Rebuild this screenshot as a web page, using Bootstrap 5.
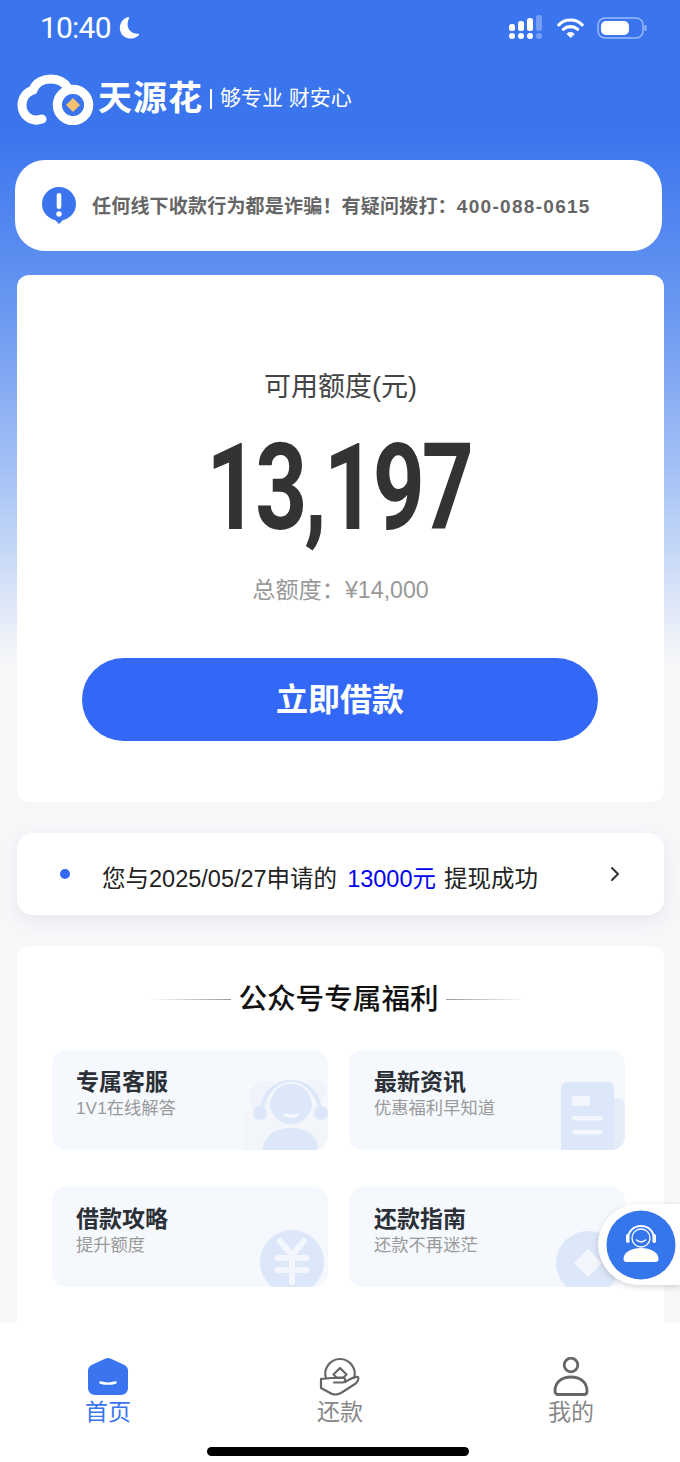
<!DOCTYPE html>
<html lang="zh-CN">
<head>
    <meta charset="UTF-8" />
    <meta name="viewport" content="width=device-width, initial-scale=1.0" />
    <title>天源花</title>
    <link href="https://cdn.jsdelivr.net/npm/bootstrap@5.3.2/dist/css/bootstrap.min.css" rel="stylesheet">
    <style>
        html, body { margin: 0; height: 100%; }
        body { font-family: "Liberation Sans", "Noto Sans CJK SC", sans-serif; background: #f6f7f9; }
        .app-screen { width: 680px; height: 1462px; overflow: hidden; background: linear-gradient(180deg, #3a75ef 0, #3a75ee 130px, #6d9af2 320px, #b4ccf6 510px, #f6f7f9 660px); }
        .status-row { height: 54px; padding: 1px 33px 0 40px; color: #fff; }
        .clock { font-family: "Roboto", sans-serif; font-size: 30px; line-height: 40px; letter-spacing: -.8px; }
        .status-gap { margin-left: 13px; }
        .logo-row { height: 51px; margin: 20px 0 0 17px; color: #fff; }
        .logo-name { font-size: 34px; font-weight: 700; line-height: 51px; letter-spacing: 1px; margin: -3px 0 0 3px; }
        .logo-bar { width: 2px; height: 20px; background: #fff; margin: -2px 8px 0 7px; }
        .logo-slogan { font-size: 21px; line-height: 51px; margin-top: -4px; }
        .scam-box { height: 91px; margin: 35px 18px 0 15px; padding-left: 26px; background: #fff; border-radius: 30px; }
        .scam-text { font-size: 19px; font-weight: 700; color: #666; margin: 3px 0 0 15px; letter-spacing: .2px; white-space: nowrap; }
        .scam-tel { letter-spacing: 1.3px; }
        .limit-card { height: 527px; margin: 24px 16px 0 17px; padding-top: 92px; background: #fff; border-radius: 12px; text-align: center; }
        .limit-label { font-size: 27px; line-height: 40px; color: #444; }
        .limit-value { font-family: "Roboto", sans-serif; font-weight: 700; font-size: 121px; line-height: 130px; margin-top: 16px; color: #333; letter-spacing: -4px; transform: translateX(-2px) scaleX(.75); }
        .limit-total { font-size: 23.2px; line-height: 34px; margin-top: 20px; color: #999; }
        .borrow-btn { display: block; width: 516px; height: 83px; margin: 51px 0 0 65px; padding: 0; border: 0; border-radius: 42px; background: #3268f5; color: #fff; font-size: 32px; font-weight: 700; }
        .notice-bar { height: 82px; margin: 31px 16px 0 17px; padding: 0 43px; background: #fff; border-radius: 16px; box-shadow: 0 6px 16px rgba(40, 60, 100, .07); color: #222; font-size: 23.5px; }
        .notice-dot { width: 10px; height: 10px; border-radius: 50%; background: #3268f5; margin: 0 32px 0 0; }
        .notice-text { margin-top: 11px; }
        .notice-amount { color: #0000f0; margin: 0 8px 0 10px; }
        .perks-card { height: 420px; margin: 31px 16px 0 17px; padding: 36px 39px 0 35px; background: #fff; border-radius: 12px; }
        .perks-title { font-size: 28.6px; font-weight: 500; line-height: 34px; color: #111; }
        .title-rule { width: 81px; height: 1px; }
        .rule-l { background: linear-gradient(90deg, #fff, #999); margin-right: 7px; }
        .rule-r { background: linear-gradient(90deg, #999, #fff); margin-left: 7px; }
        .perks-grid { display: grid; grid-template-columns: 276px 276px; column-gap: 21px; row-gap: 37px; margin-top: 34px; }
        .perk-tile { height: 100px; padding: 16px 0 0 25px; background: #f5f8fc; border-radius: 14px; overflow: hidden; }
        .perk-tile:nth-child(odd) { padding-left: 24px; }
        .perk-name { font-size: 23px; font-weight: 700; line-height: 32px; color: #2b2f36; }
        .perk-sub { font-size: 17.3px; line-height: 20px; color: #9a9a9a; }
        .perk-art { position: absolute; right: 0; bottom: 0; }
        .float-help { right: 0; top: 1204px; width: 82px; height: 81px; padding-left: 8px; background: #fff; border-radius: 41px 0 0 41px; box-shadow: 0 2px 6px rgba(0, 0, 0, .16); }
        .tab-bar { left: 0; right: 0; top: 1323px; height: 139px; background: #fff; }
        .tab-item { width: 80px; top: 34px; font-size: 23px; line-height: 30px; color: #888; text-align: center; }
        .tab-item svg { display: block; margin: 0 auto; height: 40px; }
        .tab-on { color: #3a75ef; }
        .home-bar { left: 207px; top: 124px; width: 262px; height: 9px; border-radius: 5px; background: #000; }
    </style>
</head>

<body>
    <div class="app-screen position-relative">

        <!-- status bar -->
        <div class="status-row d-flex align-items-center justify-content-between">
            <div class="d-flex align-items-center">
                <span class="clock">10:40</span>
                <svg class="ms-2" width="21" height="24" viewBox="0 0 21 24"><path d="M9 1C2 3-1 11 2 17c3 6 12 8 18 2 .5-.5 0-1.500-1-1.300C14 18 10 15 9 11 8 8 9 5 10 2.500 10.300 1.500 10 .8 9 1z" fill="#fff"/></svg>
            </div>
            <div class="d-flex align-items-center">
                <svg width="36" height="25" viewBox="0 0 36 25" fill="#fff">
                    <rect x="1" y="9" width="6" height="7" rx="2.5"/><rect x="10" y="6" width="6" height="10" rx="2.5"/><rect x="19" y="3" width="6" height="13" rx="2.5"/><rect x="28" y="0" width="6" height="16" rx="2.5" opacity=".3"/>
                    <rect x="1" y="18" width="6" height="6" rx="3"/><rect x="10" y="18" width="6" height="6" rx="3"/><rect x="19" y="18" width="6" height="6" rx="3"/><rect x="28" y="18" width="6" height="6" rx="3" opacity=".3"/>
                </svg>
                <svg class="status-gap" width="27" height="23" viewBox="0 0 30 24" fill="none" stroke="#fff" stroke-width="3.4" stroke-linecap="round">
                    <path d="M2 9c7-7 19-7 26 0"/><path d="M7 14c4.500-4 11.500-4 16 0"/><path d="M15 23l-4-4c2-2 6-2 8 0z" fill="#fff" stroke-width="1"/>
                </svg>
                <svg class="status-gap" width="50" height="24" viewBox="0 0 50 24" fill="none">
                    <rect x="1" y="2" width="45" height="20" rx="7" stroke="#fff" stroke-opacity=".5" stroke-width="1.500"/>
                    <rect x="4" y="5" width="28" height="14" rx="5" fill="#fff"/>
                    <rect x="47.500" y="9" width="2" height="6" rx="1" fill="#fff" fill-opacity=".5"/>
                </svg>
            </div>
        </div>

        <!-- logo -->
        <div class="logo-row d-flex align-items-center">
            <svg width="78" height="51" viewBox="0 0 78 51" fill="none">
                <path d="M25 45C14 49 5 41 5 31c0-8 5-13 11-15 3-8 11-11 18-11 8 0 14 4 17 9" stroke="#fff" stroke-width="9" stroke-linecap="round"/>
                <circle cx="56" cy="31" r="15.500" stroke="#fff" stroke-width="9.500"/>
                <circle cx="56" cy="31" r="11" fill="#3a75ef"/>
                <path d="M56 24l7 7-7 7-7-7z" fill="#f3c16f"/>
            </svg>
            <span class="logo-name">天源花</span>
            <span class="logo-bar"></span>
            <span class="logo-slogan">够专业 财安心</span>
        </div>

        <!-- anti scam note -->
        <div class="scam-box d-flex align-items-center">
            <svg width="36" height="39" viewBox="0 0 36 39">
                <path d="M18 1C8 1 1 9 1 18c0 9 7 15 13 16l4 4 4-4c6-1 13-7 13-16C35 9 28 1 18 1z" fill="#3a75ef"/>
                <rect x="15.700" y="7" width="4.600" height="16" rx="2.300" fill="#fff"/><circle cx="18" cy="28" r="2.700" fill="#fff"/>
            </svg>
            <span class="scam-text">任何线下收款行为都是诈骗！有疑问拨打：<span class="scam-tel">400-088-0615</span></span>
        </div>

        <!-- available limit -->
        <div class="limit-card">
            <div class="limit-label">可用额度(元)</div>
            <div class="limit-value">13,197</div>
            <div class="limit-total">总额度：¥14,000</div>
            <button type="button" class="btn borrow-btn">立即借款</button>
        </div>

        <!-- withdraw notice -->
        <div class="notice-bar d-flex align-items-center">
            <span class="notice-dot flex-shrink-0"></span>
            <span class="notice-text flex-grow-1">您与2025/05/27申请的<span class="notice-amount">13000元</span>提现成功</span>
            <svg width="12" height="16" viewBox="0 0 12 16" fill="none" stroke="#333" stroke-width="2" stroke-linecap="round" stroke-linejoin="round"><path d="M3 2l6 6-6 6"/></svg>
        </div>

        <!-- perks -->
        <div class="perks-card">
            <div class="d-flex align-items-center justify-content-center">
                <span class="title-rule rule-l"></span>
                <span class="perks-title">公众号专属福利</span>
                <span class="title-rule rule-r"></span>
            </div>
            <div class="perks-grid">
                <div class="perk-tile position-relative">
                    <div class="perk-name">专属客服</div>
                    <div class="perk-sub">1V1在线解答</div>
                    <svg class="perk-art" width="88" height="80" viewBox="0 0 88 80">
                        <circle cx="26" cy="28" r="17" fill="#f0f4fa"/><circle cx="76" cy="20" r="11" fill="#f0f4fa"/>
                        <path d="M5 80V40l18-5h50l15 5v40z" fill="#f2f5fa"/>
                        <circle cx="20" cy="43" r="7" fill="#dce7f9"/><circle cx="81" cy="43" r="7" fill="#dce7f9"/>
                        <path d="M22 43c0-18 12-31 29-31s29 13 29 31" fill="none" stroke="#dce7f9" stroke-width="4"/>
                        <circle cx="51" cy="33" r="21" fill="#dce7f9"/>
                        <path d="M30 30c2-11 11-17 21-17s19 6 21 17" fill="none" stroke="#f5f8fc" stroke-width="2"/>
                        <path d="M23 80c0-14 12-22 28-22s27 8 27 22z" fill="#dce7f9"/>
                        <path d="M45 45c4 1.500 8 1.500 12 0" stroke="#f5f8fc" stroke-width="3" fill="none" stroke-linecap="round"/>
                    </svg>
                </div>
                <div class="perk-tile position-relative">
                    <div class="perk-name">最新资讯</div>
                    <div class="perk-sub">优惠福利早知道</div>
                    <svg class="perk-art" width="66" height="70" viewBox="0 0 66 70">
                        <rect x="40" y="18" width="26" height="60" rx="8" fill="#e6edf9"/>
                        <rect x="2" y="2" width="53" height="80" rx="6" fill="#dce7f9"/>
                        <rect x="13" y="16" width="18" height="10" rx="1.500" fill="#f3f6fc"/>
                        <rect x="13" y="36" width="31" height="4.500" rx="2" fill="#f3f6fc"/>
                        <rect x="13" y="50" width="31" height="4.500" rx="2" fill="#f3f6fc"/>
                    </svg>
                </div>
                <div class="perk-tile position-relative">
                    <div class="perk-name">借款攻略</div>
                    <div class="perk-sub">提升额度</div>
                    <svg class="perk-art" width="72" height="60" viewBox="0 0 72 60">
                        <circle cx="36" cy="35" r="32" fill="#dce7f9"/>
                        <path d="M24 14l12 14 12-14M22 31h28M22 43h28M36 28v27" fill="none" stroke="#f3f6fc" stroke-width="6" stroke-linecap="round" stroke-linejoin="round"/>
                    </svg>
                </div>
                <div class="perk-tile position-relative">
                    <div class="perk-name">还款指南</div>
                    <div class="perk-sub">还款不再迷茫</div>
                    <svg class="perk-art" width="72" height="58" viewBox="0 0 72 58">
                        <circle cx="35" cy="34" r="32" fill="#dce7f9"/>
                        <path d="M35 20l14 14-14 14-14-14z" fill="#f3f6fc"/>
                    </svg>
                </div>
            </div>
        </div>

        <!-- tab bar -->
        <div class="tab-bar position-absolute">
            <div class="tab-item tab-on position-absolute" style="left: 68px">
                <svg width="42" height="40" viewBox="0 0 42 40"><path d="M18.500 1.500c1.600-.7 3.400-.7 5 0l14 6.500c2 1 3.500 3 3.500 5.500V31c0 4-3 7-7 7H8c-4 0-7-3-7-7V13.500C1 11 2.500 9 4.500 8z" fill="#3a75ef"/><path d="M13.500 25.500c5 1.500 10 1.500 15 0" stroke="#fff" stroke-width="2.400" fill="none" stroke-linecap="round"/></svg>
                首页
            </div>
            <div class="tab-item position-absolute" style="left: 300px">
                <svg width="42" height="40" viewBox="0 0 42 40" fill="none" stroke="#666" stroke-width="2.200" stroke-linejoin="round" stroke-linecap="round">
                    <path d="M7 21C4 12 11 2 21 2s17 10 14 19"/>
                    <path d="M21 11l6.500 6.500-3 3H17.500l-3-3z"/>
                    <path d="M2 22l10-1h12c3 0 3 4 0 4.500H15"/>
                    <path d="M2 22v9l11 6c3 1 6 .5 9-1l14-9c3-2 4-6 3-7-3-1-8 2-13 5"/>
                </svg>
                还款
            </div>
            <div class="tab-item position-absolute" style="left: 531px">
                <svg width="38" height="40" viewBox="0 0 38 40" fill="none" stroke="#666" stroke-width="2.800">
                    <circle cx="19" cy="8" r="6.800"/>
                    <path d="M3 34c0-9 7-14 16-14s16 5 16 14c0 2-1 3.500-2.500 3.500h-27C4 37.500 3 36 3 34z"/>
                </svg>
                我的
            </div>
            <div class="home-bar position-absolute"></div>
        </div>

        <!-- floating customer service -->
        <div class="float-help position-absolute d-flex align-items-center">
            <svg width="70" height="70" viewBox="0 0 70 70">
                <circle cx="35" cy="35" r="34.500" fill="#3576ed"/>
                <path d="M22 29c0-8 6-13 13-13s13 5 13 13" fill="none" stroke="#fff" stroke-width="1.800"/>
                <rect x="20" y="24" width="3.500" height="9" rx="1.700" fill="#fff"/><rect x="46.500" y="24" width="3.500" height="9" rx="1.700" fill="#fff"/>
                <circle cx="35" cy="28" r="9" fill="none" stroke="#fff" stroke-width="1.300"/>
                <path d="M30.500 30c3 2.500 6 2.500 9 0" fill="none" stroke="#fff" stroke-width="1.600" stroke-linecap="round"/>
                <path d="M17.500 49c0-7 8-11 17.500-11s17.500 4 17.500 11c0 2-1 3-3 3h-29c-2 0-3-1-3-3z" fill="#fff"/>
            </svg>
        </div>
    </div>

    <script src="https://cdn.jsdelivr.net/npm/bootstrap@5.3.2/dist/js/bootstrap.bundle.min.js"></script>
</body>

</html>
